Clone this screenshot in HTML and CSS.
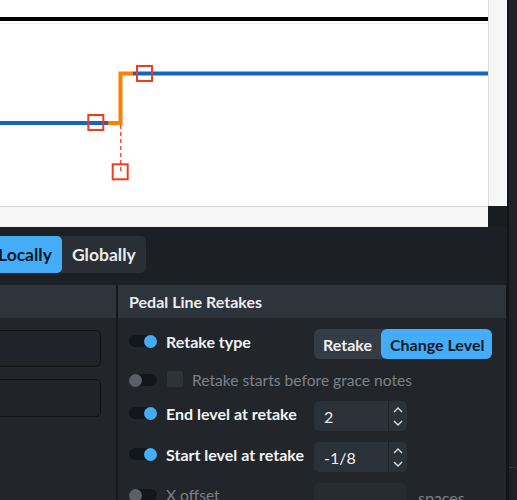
FILE: index.html
```html
<!DOCTYPE html>
<html lang="en">
<head>
<meta charset="utf-8">
<title>Pedal Line Retakes</title>
<link rel="stylesheet" href="styles.css">
</head>
<body>
<div class="app">
  <div class="main">
    <div class="score">
      <div class="canvas">
        <svg width="488" height="206" viewBox="0 0 488 206" xmlns="http://www.w3.org/2000/svg">
          <rect x="0" y="17" width="488" height="4" fill="#000"/>
          <rect x="0" y="23" width="488" height="1" fill="#efefef"/>
          <line x1="0" y1="123" x2="108" y2="123" stroke="#1565c0" stroke-width="4"/>
          <line x1="133" y1="73.5" x2="488" y2="73.5" stroke="#1565c0" stroke-width="4"/>
          <path d="M108 123 H120.5 V73.5 H133" fill="none" stroke="#ff7f00" stroke-width="4"/>
          <line x1="120.8" y1="125" x2="120.8" y2="172" stroke="#ee2a1a" stroke-width="1.2" stroke-dasharray="4 3"/>
          <rect x="88.3" y="115" width="15" height="15" fill="none" stroke="#f03c1e" stroke-width="2"/>
          <rect x="137" y="66" width="15" height="15" fill="none" stroke="#f03c1e" stroke-width="2"/>
          <rect x="112.7" y="164.3" width="15" height="15" fill="none" stroke="#f03c1e" stroke-width="2"/>
        </svg>
      </div>
      <div class="vscroll"></div>
      <div class="hscroll"></div>
      <div class="corner"></div>
    </div>
    <div class="lower">
      <div class="tabs">
        <div class="seg seg-lg">
          <span class="seg-item active">Locally</span>
          <span class="seg-item">Globally</span>
        </div>
      </div>
      <div class="panels">
        <section class="panel panel-left">
          <div class="panel-head"></div>
          <div class="panel-body left-body">
            <div class="field"></div>
            <div class="field field-b"></div>
          </div>
        </section>
        <section class="panel panel-right">
          <div class="panel-head"><h2 class="panel-title">Pedal Line Retakes</h2></div>
          <div class="panel-body props">
            <div class="prop">
              <div class="prop-label"><span class="toggle on"><span class="knob"></span></span><span class="label">Retake type</span></div>
              <div class="seg seg-sm">
                <span class="seg-item">Retake</span>
                <span class="seg-item active">Change Level</span>
              </div>
            </div>
            <div class="prop prop-short off">
              <div class="prop-label"><span class="toggle"><span class="knob"></span></span><span class="check"></span><span class="label">Retake starts before grace notes</span></div>
            </div>
            <div class="prop">
              <div class="prop-label"><span class="toggle on"><span class="knob"></span></span><span class="label">End level at retake</span></div>
              <div class="spin">
                <span class="spin-val">2</span>
                <span class="spin-arrows">
                  <svg width="10" height="6" viewBox="0 0 10 6"><polyline points="1,5 5,1 9,5" fill="none" stroke="#d9dce0" stroke-width="1.4"/></svg>
                  <svg width="10" height="6" viewBox="0 0 10 6"><polyline points="1,1 5,5 9,1" fill="none" stroke="#d9dce0" stroke-width="1.4"/></svg>
                </span>
              </div>
            </div>
            <div class="prop">
              <div class="prop-label"><span class="toggle on"><span class="knob"></span></span><span class="label">Start level at retake</span></div>
              <div class="spin">
                <span class="spin-val">-1/8</span>
                <span class="spin-arrows">
                  <svg width="10" height="6" viewBox="0 0 10 6"><polyline points="1,5 5,1 9,5" fill="none" stroke="#d9dce0" stroke-width="1.4"/></svg>
                  <svg width="10" height="6" viewBox="0 0 10 6"><polyline points="1,1 5,5 9,1" fill="none" stroke="#d9dce0" stroke-width="1.4"/></svg>
                </span>
              </div>
            </div>
            <div class="prop off">
              <div class="prop-label"><span class="toggle"><span class="knob"></span></span><span class="label">X offset</span></div>
              <div class="spin spin-empty"></div>
              <span class="unit">spaces</span>
            </div>
          </div>
        </section>
      </div>
    </div>
  </div>
  <div class="rail"><div class="rail-mark"></div></div>
</div>
</body>
</html>
```
FILE: styles.css
```css
* { box-sizing: border-box; }
html, body { margin: 0; padding: 0; }
body {
  width: 517px;
  height: 500px;
  overflow: hidden;
  background: #1c1f23;
  font-family: Lato, "Noto Sans", sans-serif;
  color: #eef0f2;
}
.app { display: flex; height: 500px; }
.main { width: 507px; display: flex; flex-direction: column; }
.rail {
  width: 10px;
  border-left: 2px solid #121416;
  background: #1e2226;
  padding-top: 467px;
}
.rail-mark { height: 1px; background: #30353b; }

/* score view */
.score {
  display: grid;
  grid-template-columns: 488px 19px;
  grid-template-rows: 206px 21px;
}
.canvas { background: #fff; overflow: hidden; }
.canvas svg { display: block; }
.vscroll { background: #f6f6f6; border-left: 1px solid #dedede; }
.hscroll { background: #f6f6f6; border-top: 1px solid #d4d4d4; }
.corner { background: #1a1d20; }

/* lower area */
.lower { flex: 1; display: flex; flex-direction: column; }
.tabs { padding-top: 9px; height: 46px; }

.seg { display: inline-flex; }
.seg-item { display: flex; align-items: center; font-weight: 700; }
.seg-item.active { background: #45adf8; color: #0c1824; }

.seg-lg {
  margin-left: -12px;
  height: 37px;
  background: #2a2f36;
  border-radius: 5px;
}
.seg-lg .seg-item { padding: 0 10px; font-size: 17.5px; border-radius: 5px; color: #e8eaed; }
.seg-lg .seg-item.active { color: #0c1824; }

.panels {
  margin-top: 12px;
  flex: 1;
  display: flex;
  gap: 2px;
  background: #15171a;
}
.panel { display: flex; flex-direction: column; }
.panel-left { width: 116px; overflow: hidden; }
.panel-right { width: 388px; }
.panel-head { height: 33px; background: #2e343b; flex: none; }
.panel-body { flex: 1; background: #22262b; }
.panel-title {
  margin: 0;
  padding-left: 11px;
  font-size: 16px;
  font-weight: 700;
  line-height: 33px;
  color: #eceef0;
}

.left-body { padding-top: 12px; display: flex; flex-direction: column; gap: 12px; }
.field {
  margin-left: -20px;
  width: 121px;
  height: 37px;
  border: 1px solid #0f1113;
  border-radius: 5px;
  background: #20242a;
}
.field-b { height: 38px; }

/* properties */
.props {
  padding: 11px 0 0 11px;
  display: flex;
  flex-direction: column;
  gap: 11px;
}
.prop { display: flex; align-items: flex-start; height: 30px; flex: none; }
.prop-short { height: 20px; }
.prop-label {
  width: 185px;
  height: 24px;
  display: flex;
  align-items: center;
  flex: none;
}
.prop-short .prop-label { height: 20px; }
.label { font-size: 16px; font-weight: 700; color: #f1f3f5; white-space: nowrap; }
.off .label { font-weight: 400; color: #7b8188; font-size: 15.6px; }

.toggle {
  width: 28px;
  height: 12px;
  margin-right: 9px;
  border-radius: 6px;
  background: #14171a;
  display: flex;
  align-items: center;
  justify-content: flex-start;
  flex: none;
}
.toggle.on { justify-content: flex-end; }
.knob { width: 13px; height: 13px; border-radius: 50%; background: #5b6068; flex: none; }
.toggle.on .knob { background: #45adf8; }

.check {
  width: 16px;
  height: 16px;
  margin: 0 9px 0 1px;
  border-radius: 2px;
  background: #2d3339;
  flex: none;
  position: relative;
  top: -1px;
}

.seg-sm {
  height: 30px;
  background: #353c45;
  border-radius: 6px;
}
.seg-sm .seg-item { padding: 0 9px; font-size: 16px; border-radius: 6px; color: #eef0f2; }
.seg-sm .seg-item.active { color: #0c1824; padding: 0 8px 0 9px; }

.spin {
  width: 93px;
  height: 30px;
  border-radius: 5px;
  background: #2b3139;
  display: flex;
  flex: none;
}
.spin-val {
  flex: 1;
  padding-left: 10px;
  font-size: 16px;
  line-height: 31px;
  color: #eef0f2;
}
.spin-arrows {
  width: 19px;
  border-left: 1px solid #1f242a;
  display: flex;
  flex-direction: column;
  align-items: center;
  justify-content: center;
  gap: 7px;
}
.spin-arrows svg { display: block; }
.spin-empty { background: #262b31; }
.unit {
  margin-left: 11px;
  font-size: 16px;
  line-height: 30px;
  color: #7b8188;
}
```
